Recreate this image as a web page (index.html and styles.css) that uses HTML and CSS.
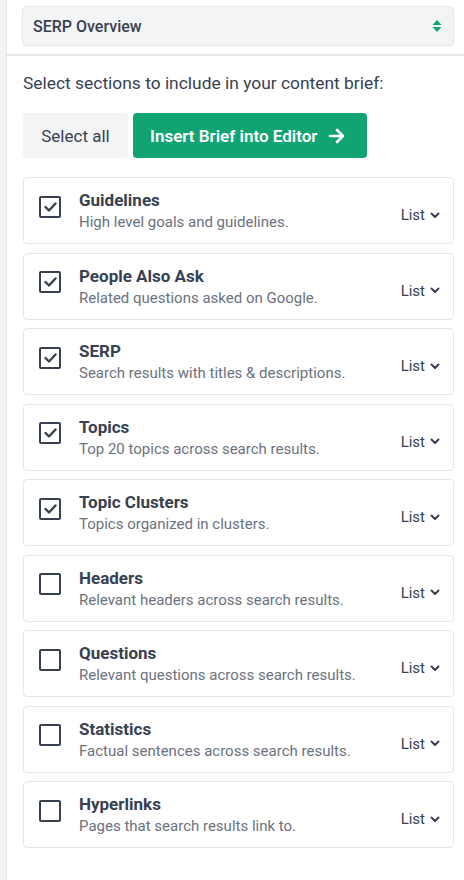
FILE: index.html
```html
<!DOCTYPE html>
<html>
<head>
<meta charset="utf-8">
<link rel="stylesheet" href="styles.css">
</head>
<body>
<div class="shell">
  <div class="rail"></div>
  <div class="panel">
    <div class="top">
      <div class="select">
        <span>SERP Overview</span>
        <svg class="updown" width="10" height="14" viewBox="0 0 10 14"><path d="M5 1 L9.5 6 H0.5 Z" fill="#10a472"/><path d="M5 13 L9.5 8 H0.5 Z" fill="#10a472"/></svg>
      </div>
    </div>
    <div class="content">
      <p class="intro">Select sections to include in your content brief:</p>
      <div class="actions">
        <button class="btn btn-gray">Select all</button>
        <button class="btn btn-green">Insert Brief into Editor
          <svg width="18" height="16" viewBox="0 0 18 16"><path d="M2 8 H15 M9 2 L15 8 L9 14" stroke="#fff" stroke-width="2.6" fill="none" stroke-linecap="round" stroke-linejoin="round"/></svg>
        </button>
      </div>
      <div class="list">
        <div class="card"><span class="cb checked"><svg width="13" height="10" viewBox="0 0 13 10"><path d="M1.5 5 L5 8.5 L11.5 1.5" stroke="#374151" stroke-width="2.4" fill="none" stroke-linecap="round" stroke-linejoin="round"/></svg></span><div class="txt"><div class="title">Guidelines</div><div class="desc">High level goals and guidelines.</div></div><div class="fmt">List <svg width="10" height="7" viewBox="0 0 10 7"><path d="M1.5 1.5 L5 5 L8.5 1.5" stroke="#374151" stroke-width="2" fill="none" stroke-linecap="round" stroke-linejoin="round"/></svg></div></div>
        <div class="card"><span class="cb checked"><svg width="13" height="10" viewBox="0 0 13 10"><path d="M1.5 5 L5 8.5 L11.5 1.5" stroke="#374151" stroke-width="2.4" fill="none" stroke-linecap="round" stroke-linejoin="round"/></svg></span><div class="txt"><div class="title">People Also Ask</div><div class="desc">Related questions asked on Google.</div></div><div class="fmt">List <svg width="10" height="7" viewBox="0 0 10 7"><path d="M1.5 1.5 L5 5 L8.5 1.5" stroke="#374151" stroke-width="2" fill="none" stroke-linecap="round" stroke-linejoin="round"/></svg></div></div>
        <div class="card"><span class="cb checked"><svg width="13" height="10" viewBox="0 0 13 10"><path d="M1.5 5 L5 8.5 L11.5 1.5" stroke="#374151" stroke-width="2.4" fill="none" stroke-linecap="round" stroke-linejoin="round"/></svg></span><div class="txt"><div class="title">SERP</div><div class="desc">Search results with titles &amp; descriptions.</div></div><div class="fmt">List <svg width="10" height="7" viewBox="0 0 10 7"><path d="M1.5 1.5 L5 5 L8.5 1.5" stroke="#374151" stroke-width="2" fill="none" stroke-linecap="round" stroke-linejoin="round"/></svg></div></div>
        <div class="card"><span class="cb checked"><svg width="13" height="10" viewBox="0 0 13 10"><path d="M1.5 5 L5 8.5 L11.5 1.5" stroke="#374151" stroke-width="2.4" fill="none" stroke-linecap="round" stroke-linejoin="round"/></svg></span><div class="txt"><div class="title">Topics</div><div class="desc">Top 20 topics across search results.</div></div><div class="fmt">List <svg width="10" height="7" viewBox="0 0 10 7"><path d="M1.5 1.5 L5 5 L8.5 1.5" stroke="#374151" stroke-width="2" fill="none" stroke-linecap="round" stroke-linejoin="round"/></svg></div></div>
        <div class="card"><span class="cb checked"><svg width="13" height="10" viewBox="0 0 13 10"><path d="M1.5 5 L5 8.5 L11.5 1.5" stroke="#374151" stroke-width="2.4" fill="none" stroke-linecap="round" stroke-linejoin="round"/></svg></span><div class="txt"><div class="title">Topic Clusters</div><div class="desc">Topics organized in clusters.</div></div><div class="fmt">List <svg width="10" height="7" viewBox="0 0 10 7"><path d="M1.5 1.5 L5 5 L8.5 1.5" stroke="#374151" stroke-width="2" fill="none" stroke-linecap="round" stroke-linejoin="round"/></svg></div></div>
        <div class="card"><span class="cb"></span><div class="txt"><div class="title">Headers</div><div class="desc">Relevant headers across search results.</div></div><div class="fmt">List <svg width="10" height="7" viewBox="0 0 10 7"><path d="M1.5 1.5 L5 5 L8.5 1.5" stroke="#374151" stroke-width="2" fill="none" stroke-linecap="round" stroke-linejoin="round"/></svg></div></div>
        <div class="card"><span class="cb"></span><div class="txt"><div class="title">Questions</div><div class="desc">Relevant questions across search results.</div></div><div class="fmt">List <svg width="10" height="7" viewBox="0 0 10 7"><path d="M1.5 1.5 L5 5 L8.5 1.5" stroke="#374151" stroke-width="2" fill="none" stroke-linecap="round" stroke-linejoin="round"/></svg></div></div>
        <div class="card"><span class="cb"></span><div class="txt"><div class="title">Statistics</div><div class="desc">Factual sentences across search results.</div></div><div class="fmt">List <svg width="10" height="7" viewBox="0 0 10 7"><path d="M1.5 1.5 L5 5 L8.5 1.5" stroke="#374151" stroke-width="2" fill="none" stroke-linecap="round" stroke-linejoin="round"/></svg></div></div>
        <div class="card"><span class="cb"></span><div class="txt"><div class="title">Hyperlinks</div><div class="desc">Pages that search results link to.</div></div><div class="fmt">List <svg width="10" height="7" viewBox="0 0 10 7"><path d="M1.5 1.5 L5 5 L8.5 1.5" stroke="#374151" stroke-width="2" fill="none" stroke-linecap="round" stroke-linejoin="round"/></svg></div></div>
      </div>
    </div>
  </div>
</div>
</body>
</html>
```

FILE: styles.css
```css
* { box-sizing: border-box; }
html, body { margin: 0; padding: 0; background: #fff; }
body { font-family: Roboto, "Liberation Sans", sans-serif; color: #374151; }
.shell { display: flex; min-height: 880px; }
.rail { width: 7px; flex: none; background: #f3f4f6; border-right: 1px solid #e5e7eb; }
.panel { flex: 1; }
.top { padding: 6px 10px 8px 15px; border-bottom: 2px solid #e5e7eb; }
.select {
  height: 40px; display: flex; align-items: center; justify-content: space-between;
  background: #f3f4f6; border: 1px solid #e5e7eb; border-radius: 4px;
  padding: 0 10px 0 10px; font-size: 16px; font-weight: 500; color: #374151;
}
.updown { margin-right: 1px; }
.content { padding: 0 10px 0 16px; }
.intro { margin: 16px 0 0 0; font-size: 17.4px; line-height: 22px; color: #374151; }
.actions { display: flex; gap: 5px; margin-top: 19px; }
.btn { height: 45px; border: none; border-radius: 4px; font-family: inherit; font-size: 17px; padding: 0 17px; display: flex; align-items: center; }
.btn-gray { background: #f3f4f6; color: #374151; width: 105px; justify-content: center; }
.btn-green { background: #10a472; color: #fff; font-weight: 600; width: 234px; gap: 11px; padding-left: 17px; }
.list { margin-top: 19px; display: flex; flex-direction: column; gap: 8.5px; }
.card {
  height: 67px; border: 1px solid #e5e7eb; border-radius: 4px;
  display: flex; align-items: center; padding: 0 13px 0 15px;
}
.cb {
  width: 22px; height: 22px; border: 2px solid #374151; border-radius: 2px; flex: none;
  display: flex; align-items: center; justify-content: center; margin-top: -8px;
}
.txt { flex: 1; margin-left: 18px; margin-top: 0; }
.title { font-size: 17px; font-weight: 700; line-height: 22px; color: #374151; }
.desc { font-size: 15px; line-height: 20px; color: #6b7280; margin-top: 1px; }
.fmt { font-size: 15px; color: #374151; display: flex; align-items: center; gap: 5px; margin-top: 9px; }
```
